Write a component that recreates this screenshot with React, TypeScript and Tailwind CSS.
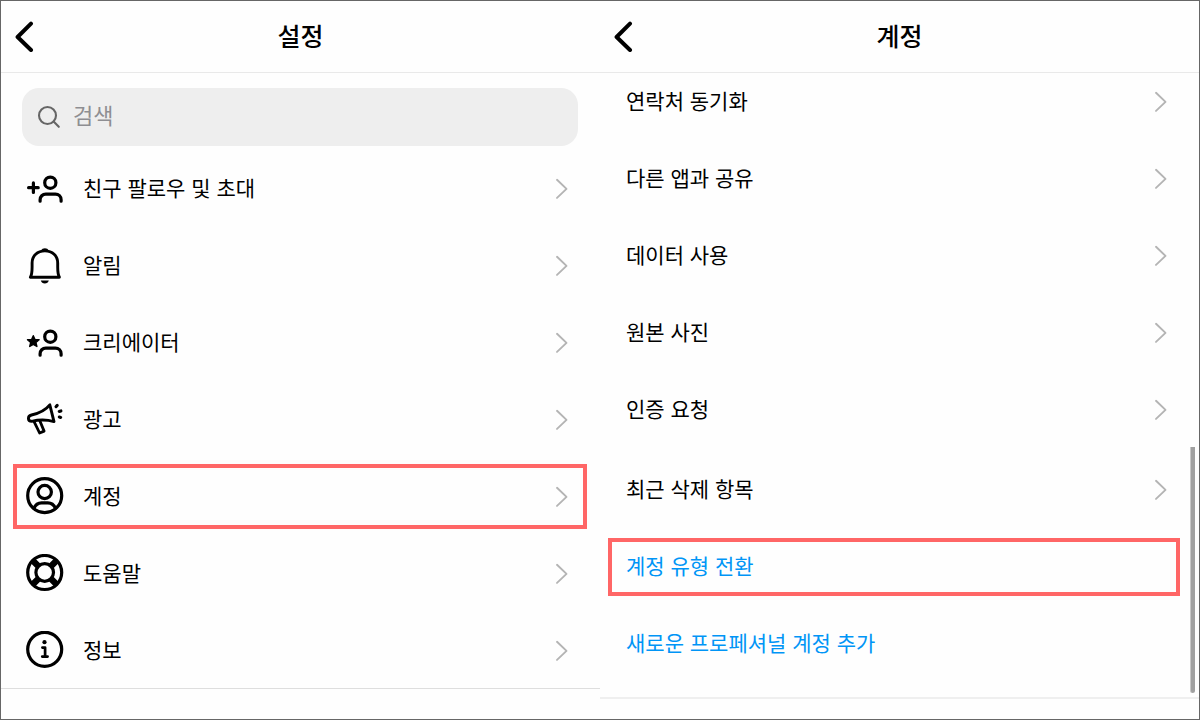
import type { ReactNode } from 'react';

function BackIcon() {
  return (
    <svg className="h-[31px] w-5" viewBox="0 0 20 31" fill="none" stroke="#000" strokeWidth="4" strokeLinecap="round" strokeLinejoin="round" aria-hidden="true">
      <path d="M17 2.600 3.600 16 17 29" />
    </svg>
  );
}

function ChevronIcon() {
  return (
    <svg className="h-[22px] w-[14px] shrink-0" viewBox="0 0 14 22" fill="none" stroke="#b4b4b4" strokeWidth="1.9" strokeLinecap="round" strokeLinejoin="round" aria-hidden="true">
      <path d="M2 1.800 11.500 10.900 2 19.900" />
    </svg>
  );
}

function SearchIcon() {
  return (
    <svg className="h-6 w-6 shrink-0" viewBox="0 0 24 24" fill="none" stroke="#666" strokeWidth="2.1" strokeLinecap="round" aria-hidden="true">
      <circle cx="10.500" cy="10.500" r="8.500" />
      <path d="m16.600 16.600 5.200 5.200" />
    </svg>
  );
}

function RowIcon({ children }: { children: ReactNode }) {
  return (
    <svg className="size-[39px] shrink-0" viewBox="0 0 39 39" fill="none" stroke="#000" strokeWidth="3.2" strokeLinecap="round" strokeLinejoin="round" aria-hidden="true">
      {children}
    </svg>
  );
}

const person = (
  <>
    <circle cx="25.3" cy="13.7" r="5.6" />
    <path d="M15.1 32.2v-1.4c0-3.200 2.500-5.700 5.700-5.700h9.600c3.200 0 5.700 2.500 5.700 5.700v1.400" />
  </>
);

const settings: { label: string; icon: ReactNode; marked?: boolean }[] = [
  {
    label: '친구 팔로우 및 초대',
    icon: (
      <>
        {person}
        <path d="M3.600 18.700h9.600M8.400 13.900v9.600" />
      </>
    ),
  },
  {
    label: '알림',
    icon: (
      <>
        <path strokeWidth="2.9" d="M5.400 31.200h29c-1.400-2.600-1.700-6-1.700-10.300V17C32.700 9.700 27.400 4.900 19.900 4.900S7.100 9.700 7.100 17v3.900c0 4.300-.3 7.700-1.700 10.300Z" />
        <path strokeWidth="2" d="M17.300 4.500c.5-1.700 4.700-1.700 5.200 0Z" fill="#000" />
        <path stroke="none" fill="#000" d="M15.800 34.400h8c-.5 1.900-2 3-4 3s-3.500-1.100-4-3Z" />
      </>
    ),
  },
  {
    label: '크리에이터',
    icon: (
      <>
        {person}
        <path fill="#000" strokeWidth="1.4" d="m8.300 12.700 1.600 3.700 4.200.4-3.200 2.700 1 4-3.600-2.100-3.600 2.100 1-4-3.200-2.700 4.200-.4Z" />
      </>
    ),
  },
  {
    label: '광고',
    icon: (
      <>
        <path strokeWidth="2.900" d="M24.800 4.800C20.500 10.300 13.500 13.300 6.500 15 2.200 16.200 2.600 21.300 6.600 21.300 14 19.700 21.500 19.500 29 21.600Z" />
        <path strokeWidth="2.800" d="m9.200 21.800 5.400 11.200 4.500-1.900-4.300-10.300" />
        <path strokeWidth="3.100" d="m31 6.700 1.200-1.300M34.200 11.400l1.700-.5M34.300 17l1.400.4" />
      </>
    ),
  },
  {
    label: '계정',
    marked: true,
    icon: (
      <>
        <circle cx="19.700" cy="18.700" r="17" />
        <circle cx="19.700" cy="15" r="6.700" />
        <path d="M8.900 31.400c1.500-3.400 4-5.500 7.600-5.500h6.400c3.600 0 6.100 2.100 7.600 5.500" />
      </>
    ),
  },
  {
    label: '도움말',
    icon: (
      <>
        <circle cx="19.700" cy="18.500" r="17" />
        <circle cx="19.700" cy="18.500" r="8.800" />
        <path strokeWidth="6.500" strokeLinecap="butt" d="m13.200 12-5-5M26.200 12l5-5M13.200 25l-5 5M26.200 25l5 5" />
      </>
    ),
  },
  {
    label: '정보',
    icon: (
      <>
        <circle cx="19.700" cy="18.300" r="17" />
        <circle cx="19.500" cy="11.200" r="2.100" fill="#000" stroke="none" />
        <path strokeWidth="2.700" d="M17.400 16.600h2.700v9M17.200 25.600h5.400" />
      </>
    ),
  },
];

const accountRows = ['연락처 동기화', '다른 앱과 공유', '데이터 사용', '원본 사진', '인증 요청'];

function Header({ title }: { title: string }) {
  return (
    <header className="grid h-[72px] grid-cols-[1fr_auto_1fr] items-center border-b border-[#e9e9e9] px-[13px]">
      <button type="button" aria-label="뒤로" className="justify-self-start">
        <BackIcon />
      </button>
      <h1 className="text-[25px] leading-8 font-medium">{title}</h1>
    </header>
  );
}

function AccountRow({ label }: { label: string }) {
  return (
    <li>
      <a href="#" className="flex h-[58px] items-center justify-between border-4 border-transparent pr-2 pl-[14px]">
        <span>{label}</span>
        <ChevronIcon />
      </a>
    </li>
  );
}

export default function App() {
  return (
    <main className="grid min-h-screen grid-cols-2 border border-[#666] bg-[#fefefe] font-['Liberation_Sans','Noto_Sans_CJK_KR',sans-serif] text-[21px] leading-7 text-black">
      <section>
        <Header title="설정" />
        <div className="border-b border-[#dedede] pt-[15px] pr-[13px] pb-[5px] pl-3">
          <label className="mr-[9px] ml-[9px] flex h-[58px] items-center gap-3 rounded-[17px] bg-[#eee] pr-4 pl-[15px]">
            <SearchIcon />
            <input type="search" aria-label="검색" placeholder="검색" className="min-w-0 flex-1 bg-transparent text-[22px] leading-8 outline-none placeholder:text-[#8e8e92]" />
          </label>
          <ul className="mt-[10px] flex flex-col gap-3">
            {settings.map((row) => (
              <li key={row.label}>
                <a href="#" className={`flex h-[65px] items-center border-4 pr-[14px] pl-2 ${row.marked ? 'border-[#ff6666]' : 'border-transparent'}`}>
                  <RowIcon>{row.icon}</RowIcon>
                  <span className="ml-[19px] flex-1">{row.label}</span>
                  <ChevronIcon />
                </a>
              </li>
            ))}
          </ul>
        </div>
      </section>

      <section className="relative">
        <Header title="계정" />
        <div className="border-b-2 border-[#efefef] pr-[19px] pb-6 pl-2">
          <ul className="flex flex-col gap-[19px]">
            {accountRows.map((label) => (
              <AccountRow key={label} label={label} />
            ))}
          </ul>
          <ul className="mt-[22px] flex flex-col gap-[19px]">
            <AccountRow label="최근 삭제 항목" />
            <li>
              <button type="button" className="flex h-[58px] w-full items-center border-4 border-[#ff6666] pl-[14px] text-[#0095f6]">
                계정 유형 전환
              </button>
            </li>
            <li>
              <button type="button" className="flex h-[58px] w-full items-center border-4 border-transparent pl-[14px] text-[#0095f6]">
                새로운 프로페셔널 계정 추가
              </button>
            </li>
          </ul>
        </div>
        <div className="absolute top-[446px] right-1 h-[246px] w-[5px] rounded-b-sm border-l border-[#c8c8c8] bg-[#a0a0a0]" />
      </section>
    </main>
  );
}
